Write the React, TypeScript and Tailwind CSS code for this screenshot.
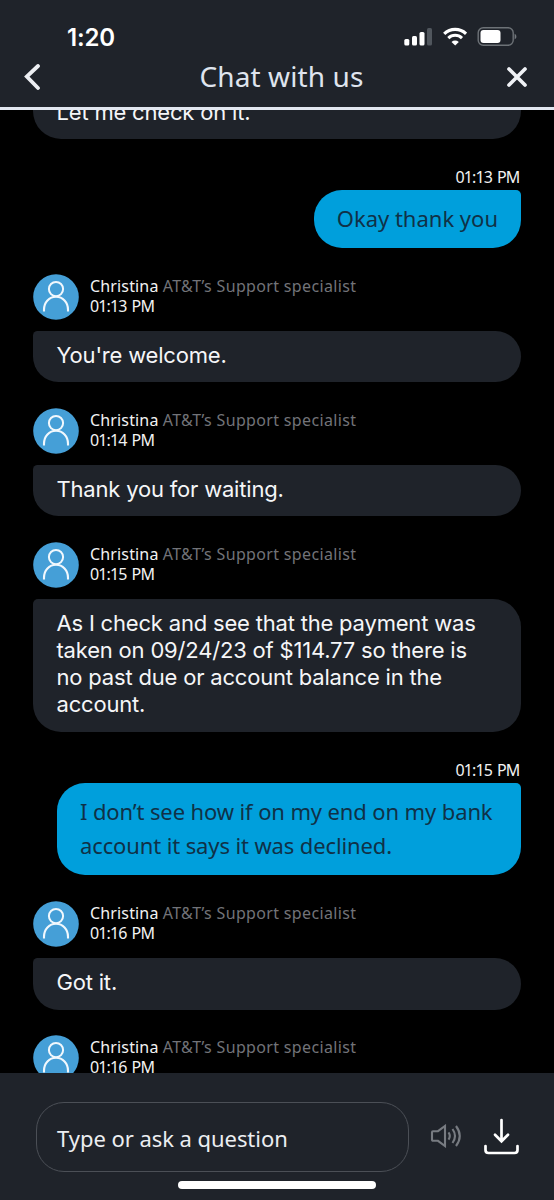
import type { ReactNode } from "react";

const ALECK = "font-['Noto_Sans','Open_Sans',sans-serif]";

const StatusBar = () => (
	<div className="flex h-[52px] items-start justify-between pl-[67px] pr-[37px] pt-[22px]">
		<span className="pt-px font-['Inter',sans-serif] text-[24px] font-semibold leading-[30px] tracking-[-0.2px] text-white">
			1:20
		</span>
		<div className="flex pt-[5px]">
			<svg width="28" height="19" viewBox="0 0 28 19" className="mr-[10px]">
				<rect x="0.3" y="12" width="5" height="6.5" rx="1.5" fill="#fff" />
				<rect x="8" y="9" width="5" height="9.5" rx="1.5" fill="#fff" />
				<rect x="15.5" y="5" width="5" height="13.5" rx="1.5" fill="#fff" />
				<rect x="23" y="1" width="5" height="17.5" rx="1.5" fill="#50565d" />
			</svg>
			<svg width="25" height="19" viewBox="0 0 25 19" className="mr-[10px]" fill="none" stroke="#fff">
				<path d="M2.2 6.8C8.3 1 18 1 24.1 6.8" strokeWidth="3.2" />
				<path d="M6.3 11.1c3.9-3.8 9.8-3.8 13.7 0" strokeWidth="3" />
				<path d="M9.5 14.9c2.2-1.9 5.1-1.9 7.3 0L13.2 18.4z" fill="#fff" stroke="none" />
			</svg>
			<svg width="40" height="19" viewBox="0 0 40 19">
				<rect x="1.2" y="0.8" width="35" height="17.4" rx="5" fill="none" stroke="#6d7277" strokeWidth="1.4" />
				<rect x="3.5" y="3" width="20" height="13" rx="3" fill="#fff" />
				<path d="M37.6 6.8c2.4 1 2.4 4.6 0 5.6z" fill="#73787d" />
			</svg>
		</div>
	</div>
);

const Header = () => (
	<header className="h-[110px] shrink-0 border-b-[3px] border-[#e1e6ef] bg-[#1f232a]">
		<StatusBar />
		<div className="flex h-[50px] items-center pl-[24px] pr-[26px]">
			<svg width="17" height="26" viewBox="0 0 17 26" fill="none" stroke="#eceef2" strokeWidth="3.8" strokeLinecap="round">
				<path d="M14 2 2.8 12.5 14 24" />
			</svg>
			<h1 className={`${ALECK} -mt-[2px] ml-[158.5px] flex-1 text-[28px] leading-[38px] tracking-[0.1px] text-[#dfe4ee]`}>
				Chat with us
			</h1>
			<svg width="22" height="22" viewBox="0 0 22 22" fill="none" stroke="#f0f2f6" strokeWidth="3.7" strokeLinecap="round">
				<path d="m3 3 16 16M19 3 3 19" />
			</svg>
		</div>
	</header>
);

const Avatar = () => (
	<svg width="46" height="46" viewBox="0 0 46 46" fill="none" className="shrink-0">
		<circle cx="23" cy="23" r="22.8" fill="#459fd7" />
		<circle cx="23" cy="15.1" r="7.1" stroke="#f1f8fd" strokeWidth="2" />
		<path d="M11 37.5v-1.8c0-7.4 5.2-12.9 12-12.9s12 5.5 12 12.9v1.8" stroke="#f1f8fd" strokeWidth="2.1" />
	</svg>
);

const AgentMeta = ({ time }: { time: string }) => (
	<div className="flex h-[46px] gap-[11px]">
		<Avatar />
		<div className={`${ALECK} pt-[2px] text-[16px] leading-[20px] text-[#f2f2f2]`}>
			<p className="whitespace-nowrap">
				<span className="tracking-[0.15px]">Christina</span>{" "}
				<span className="tracking-[0.34px] text-[#727378]">AT&amp;T’s Support specialist</span>
			</p>
			<p className="tracking-[-0.85px] [word-spacing:1.6px]">{time}</p>
		</div>
	</div>
);

const AgentMessage = ({ time, children }: { time: string; children: ReactNode }) => (
	<div className="mb-[25.5px]">
		<AgentMeta time={time} />
		<div className="mt-[11px] rounded-[28px] rounded-tl-[5px] bg-[#1f232a] pb-[13px] pl-[23.5px] pt-[11px] font-['Inter',sans-serif] text-[22px] leading-[27.3px] tracking-[-0.19px] text-[#f5f6f8]">
			{children}
		</div>
	</div>
);

const UserMessage = ({ time, children }: { time: string; children: ReactNode }) => (
	<div className={`${ALECK} mb-[26px] flex flex-col items-end`}>
		<p className="mb-[3px] pr-[1.5px] text-[16px] leading-[20px] tracking-[-0.85px] text-[#f2f2f2] [word-spacing:1.6px]">
			{time}
		</p>
		<div className="max-w-[464px] rounded-[28px] rounded-tr-[5px] bg-[#009fdc] px-[23px] pb-[13.5px] pt-[10.5px] text-[22px] leading-[34px] text-[#103147]">
			{children}
		</div>
	</div>
);

const Composer = () => (
	<footer className="h-[127px] shrink-0 bg-[#1f232a] pt-[29px]">
		<div className="flex items-center pl-[35.5px] pr-[34px]">
			<div className={`${ALECK} flex h-[70px] w-[373px] items-center rounded-[28px] border border-[#4b4f56] pl-[20.5px] pt-[2px] text-[22px] tracking-[-0.05px] text-[#eceef1]`}>
				Type or ask a question
			</div>
			<svg width="32" height="24" viewBox="0 0 32 24" fill="none" stroke="#777b81" strokeWidth="2.1" className="-mt-[2px] ml-[21px]">
				<path d="M2 8.2Q2 7.2 3 7.2h5l7-5.2v20l-7-5.2H3q-1 0-1-1z" />
				<path d="M18.5 8.3q2.6 3.7 0 7.4M22.5 5q5 7 0 14M26 2q7.5 10 0 20" />
			</svg>
			<svg width="36" height="38" viewBox="0 0 36 38" fill="none" stroke="#fff" strokeWidth="2.7" strokeLinecap="round" className="ml-[22px]">
				<path d="M17.5 2v21M11 16.8l6.5 6.5 6.5-6.5" />
				<path d="M1.5 28v4q0 3 3 3h26q3 0 3-3v-4" />
			</svg>
		</div>
		<div className="mx-auto mt-[9px] h-[8px] w-[198px] rounded-full bg-white" />
	</footer>
);

export default function App() {
	return (
		<div className="flex h-[1200px] w-[554px] flex-col overflow-hidden bg-black">
			<Header />
			<main className="min-h-0 flex-1 overflow-hidden pl-[33px] pr-[33px]">
				<div className="-mt-[23px] mb-[28px] h-[52px] rounded-b-[28px] bg-[#1f232a] pl-[23.5px] pt-[12px] font-['Inter',sans-serif] text-[22px] leading-[27.3px] tracking-[-0.19px] text-[#f5f6f8]">
					Let me check on it.
				</div>
				<UserMessage time="01:13 PM">Okay thank you</UserMessage>
				<AgentMessage time="01:13 PM">You're welcome.</AgentMessage>
				<AgentMessage time="01:14 PM">Thank you for waiting.</AgentMessage>
				<AgentMessage time="01:15 PM">
					As I check and see that the payment was
					<br />
					taken on 09/24/23 of $114.77 so there is
					<br />
					no past due or account balance in the
					<br />
					account.
				</AgentMessage>
				<div className="pt-[3px]">
					<UserMessage time="01:15 PM">
						<span className="block w-[418px] whitespace-nowrap tracking-[-0.12px]">
							I don’t see how if on my end on my bank
							<br />
							account it says it was declined.
						</span>
					</UserMessage>
				</div>
				<AgentMessage time="01:16 PM">Got it.</AgentMessage>
				<AgentMeta time="01:16 PM" />
			</main>
			<Composer />
		</div>
	);
}
